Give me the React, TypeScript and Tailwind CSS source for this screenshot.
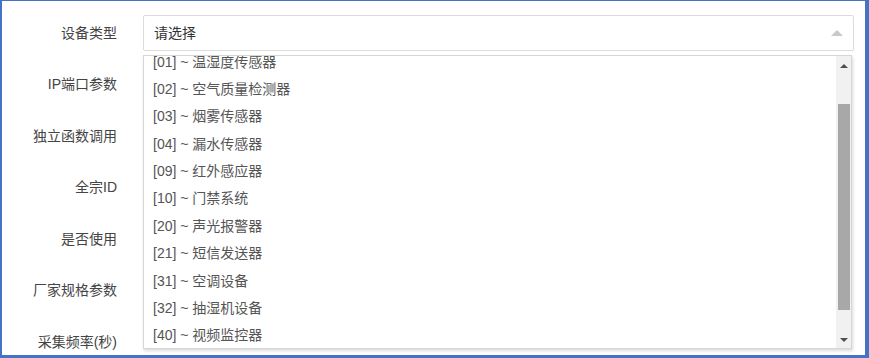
import React from 'react';

const labels = ['设备类型', 'IP端口参数', '独立函数调用', '全宗ID', '是否使用', '厂家规格参数', '采集频率(秒)'];

const options = [
  '[01] ~ 温湿度传感器',
  '[02] ~ 空气质量检测器',
  '[03] ~ 烟雾传感器',
  '[04] ~ 漏水传感器',
  '[09] ~ 红外感应器',
  '[10] ~ 门禁系统',
  '[20] ~ 声光报警器',
  '[21] ~ 短信发送器',
  '[31] ~ 空调设备',
  '[32] ~ 抽湿机设备',
  '[40] ~ 视频监控器',
];

export default function App() {
  return (
    <div
      className="w-[869px] h-[358px] bg-white border-t border-l-2 border-r-[4px] border-b-[3px] border-[#4472c4] overflow-hidden"
      style={{ fontFamily: '"Liberation Sans", "Noto Sans CJK SC", sans-serif' }}
    >
      <div className="relative pt-[14px] pr-[11px]">
        <div className="flex flex-col gap-[15.5px]">
          {labels.map((label, i) => (
            <div key={label} className="flex items-center h-9">
              <div className="w-[115px] text-right text-[14px] text-[#444] shrink-0">{label}</div>
              <div className="ml-[26px] flex-1 h-9">
                {i === 0 && (
                  <div className="h-9 border border-[#dcdcdc] rounded-[2px] flex items-center justify-between pl-[10px] pr-[10px]">
                    <span className="text-[14px] text-[#333]">请选择</span>
                    <span className="w-0 h-0 border-l-[6px] border-r-[6px] border-b-[6px] border-l-transparent border-r-transparent border-b-[#c8c8c8]" />
                  </div>
                )}
              </div>
            </div>
          ))}
        </div>

        {/* dropdown menu */}
        <div className="absolute left-[141px] top-[54px] w-[709px] h-[294px] bg-white border border-[#d6d6d6] shadow-[1px_2px_3px_rgba(0,0,0,0.15)] flex overflow-hidden">
          <div className="flex-1 overflow-hidden">
            <div className="mt-[-7.7px] flex flex-col">
              {options.map((o) => (
                <div key={o} className="h-[27.4px] flex items-center pl-[9px] text-[14px] text-[#555] whitespace-nowrap">
                  {o}
                </div>
              ))}
            </div>
          </div>
          <div className="w-[15px] bg-[#f1f1f1] flex flex-col items-center shrink-0">
            <div className="h-[19px] flex items-center justify-center">
              <span className="w-0 h-0 border-l-[4px] border-r-[4px] border-b-[4px] border-l-transparent border-r-transparent border-b-[#505050]" />
            </div>
            <div className="mt-[29px] w-[12px] h-[206px] bg-[#a8a8a8]" />
            <div className="flex-1" />
            <div className="h-[17px] flex items-center justify-center">
              <span className="w-0 h-0 border-l-[4px] border-r-[4px] border-t-[4px] border-l-transparent border-r-transparent border-t-[#505050]" />
            </div>
          </div>
        </div>
      </div>
    </div>
  );
}
